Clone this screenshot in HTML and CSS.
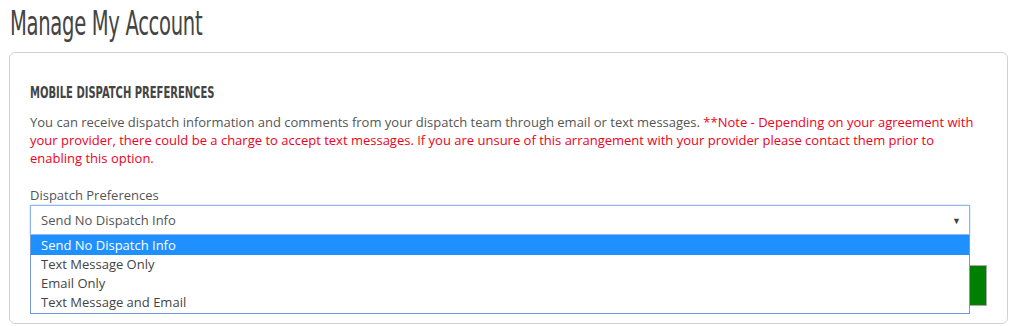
FILE: index.html
```html
<!DOCTYPE html>
<html>

<head>
    <meta charset="utf-8">
    <title>Manage My Account</title>
    <link rel="stylesheet" href="styles.css">
</head>

<body>
    <h1 class="page-title">Manage My Account</h1>

    <div class="panel">
        <h4 class="panel-heading">Mobile Dispatch Preferences</h4>
        <p class="intro">You can receive dispatch information and comments from your dispatch team through email or text messages.
            <span class="note">**Note - Depending on your agreement with your provider, there could be a charge to accept text messages. If you are unsure of this arrangement with your provider please contact them prior to enabling this option.</span>
        </p>

        <label class="field-label">Dispatch Preferences</label>
        <div class="select-wrap">
            <div class="select-box">
                <span>Send No Dispatch Info</span>
                <span class="caret">&#9660;</span>
            </div>
            <ul class="select-list">
                <li class="selected">Send No Dispatch Info</li>
                <li>Text Message Only</li>
                <li>Email Only</li>
                <li>Text Message and Email</li>
            </ul>
        </div>

        <div class="actions">
            <button class="save-button">Save</button>
        </div>
    </div>
</body>

</html>
```

FILE: styles.css
```css
body {
    margin: 0;
    padding: 0 1px 0 9px;
    font-family: "Open Sans", "Noto Sans", sans-serif;
    font-size: 13px;
    color: #555;
}

.page-title {
    margin: 0 0 0 1px;
    padding-top: 3px;
    height: 52px;
    font-family: "DejaVu Sans Condensed", "DejaVu Sans", sans-serif;
    font-stretch: condensed;
    font-weight: normal;
    font-size: 34px;
    letter-spacing: -0.5px;
    line-height: 40px;
    color: #444;
    transform: scaleX(0.64);
    transform-origin: left;
    white-space: nowrap;
    box-sizing: border-box;
}

.panel {
    border: 1px solid #d2d2d2;
    border-radius: 6px;
    padding: 30px 20px 16px 20px;
    height: 272px;
    box-sizing: border-box;
}

.panel-heading {
    margin: 0 0 10px 0;
    font-family: "DejaVu Sans Condensed", "DejaVu Sans", sans-serif;
    font-stretch: condensed;
    font-weight: bold;
    font-size: 15px;
    line-height: 20px;
    text-transform: uppercase;
    color: #444;
    transform: scaleX(0.74);
    transform-origin: left;
    white-space: nowrap;
}

.intro {
    margin: 0 0 19px 0;
    line-height: 18px;
}

.note {
    color: #f0001c;
}

.field-label {
    display: block;
    line-height: 18px;
    margin-bottom: 1px;
}

.select-wrap {
    position: relative;
    width: 940px;
}

.select-box {
    display: flex;
    justify-content: space-between;
    align-items: center;
    height: 30px;
    padding: 0 8px 0 10px;
    border: 1px solid #8fb5ef;
    box-shadow: 0 0 2px #a9c7f5;
    box-sizing: border-box;
    color: #555;
}

.caret {
    font-size: 9px;
    color: #444;
}

.select-list {
    position: absolute;
    top: 30px;
    left: 0;
    right: 0;
    margin: 0;
    padding: 0 0 1px 0;
    list-style: none;
    background: #fff;
    border: 1px solid #6f98dd;
    border-top: none;
    z-index: 2;
}

.select-list li {
    height: 19px;
    line-height: 19px;
    padding-left: 10px;
    color: #444;
}

.select-list li.selected {
    height: 20px;
    line-height: 20px;
    background: #1e90ff;
    color: #fff;
}

.actions {
    display: flex;
    justify-content: flex-end;
    margin-top: 30px;
}

.save-button {
    width: 120px;
    height: 41px;
    background: #008000;
    border: 1px solid #aaa;
    color: #fff;
}
```
